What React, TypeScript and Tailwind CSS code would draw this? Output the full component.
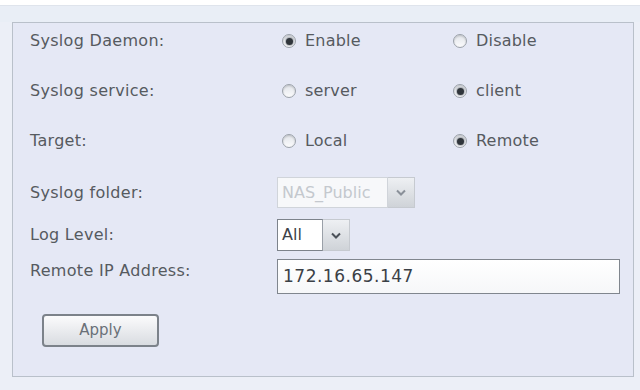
import React from "react";

const font = { fontFamily: '"DejaVu Sans", Verdana, sans-serif' };

function Radio({ checked, label }: { checked?: boolean; label: string }) {
  return (
    <div className="flex items-center w-[171px]">
      <div className="w-[14px] h-[14px] rounded-full border-[1.5px] border-[#9ca2aa] bg-gradient-to-b from-[#e2e5ea] to-[#fbfbfc] flex items-center justify-center shadow-[inset_0_1px_2px_rgba(0,0,0,0.18)]">
        {checked && <div className="w-[7px] h-[7px] rounded-full bg-[#30353b] shadow-[0_0_1px_1px_rgba(60,70,80,0.35)]" />}
      </div>
      <span className="ml-[9px] text-[16px] tracking-[0.2px] text-[#565a60]">{label}</span>
    </div>
  );
}

function Arrow({ disabled }: { disabled?: boolean }) {
  return (
    <div className="w-[27px] self-stretch bg-gradient-to-b from-[#eef0f3] to-[#cfd3d8] border border-l-0 border-[#c6cad0] flex items-center justify-center">
      <svg width="10" height="7" viewBox="0 0 10 7">
        <path d="M1 1.5 L5 5.5 L9 1.5" fill="none" stroke={disabled ? "#8a9099" : "#4a5058"} strokeWidth="2" />
      </svg>
    </div>
  );
}

const label = "w-[269px] pl-[17px] text-[16px] tracking-[0.3px] text-[#565a60]";

export default function App() {
  return (
    <div className="w-[640px] h-[390px] bg-[#eceff7] flex flex-col" style={font}>
      <div className="h-[6px] bg-white border-b border-[#dfe4ec] shrink-0" />
      <div className="h-[16px] bg-[#e9eef6] shrink-0" />
      <div className="ml-[12px] mr-[6px] h-[355px] border border-[#b9c0ca] bg-[#e5e8f5] flex flex-col shrink-0">
        <div className="h-[36px] flex items-center">
          <span className={label}>Syslog Daemon:</span>
          <Radio checked label="Enable" />
          <Radio label="Disable" />
        </div>
        <div className="h-[36px] mt-[14px] flex items-center">
          <span className={label}>Syslog service:</span>
          <Radio label="server" />
          <Radio checked label="client" />
        </div>
        <div className="h-[36px] mt-[14px] flex items-center">
          <span className={label}>Target:</span>
          <Radio label="Local" />
          <Radio checked label="Remote" />
        </div>
        <div className="h-[31px] mt-[18px] flex items-center">
          <span className={label.replace("w-[269px]", "w-[264px]")}>Syslog folder:</span>
          <div className="flex h-[31px]">
            <div className="w-[111px] border border-[#d0d4da] bg-[#f7f8fa] flex items-center pl-[4px] text-[16px] text-[#c4c8ce]">NAS_Public</div>
            <Arrow disabled />
          </div>
        </div>
        <div className="h-[32px] mt-[11px] flex items-center">
          <span className="w-[264px] pl-[17px] text-[16px] tracking-[0.3px] text-[#565a60]">Log Level:</span>
          <div className="flex h-[32px]">
            <div className="w-[46px] border border-[#7d838b] border-r-[#9aa0a8] bg-white flex items-center pl-[4px] text-[16px] text-[#3d4248]">All</div>
            <Arrow />
          </div>
        </div>
        <div className="h-[35px] mt-[8px] flex items-start">
          <span className="w-[264px] pl-[17px] text-[16px] tracking-[0.3px] text-[#565a60]">Remote IP Address:</span>
          <div className="w-[343px] h-[35px] border border-[#80868e] bg-gradient-to-b from-white to-[#f6f7f9] flex items-center pl-[5px] text-[17px] tracking-[0.5px] text-[#3b4046]">
            172.16.65.147
          </div>
        </div>
        <div className="mt-[20px] ml-[29px]">
          <div className="w-[117px] h-[33px] rounded-[4px] border-2 border-[#7c828a] bg-gradient-to-b from-[#fbfbfc] to-[#d9dce1] flex items-center justify-center text-[15px] text-[#6a7078]">
            Apply
          </div>
        </div>
      </div>
    </div>
  );
}
